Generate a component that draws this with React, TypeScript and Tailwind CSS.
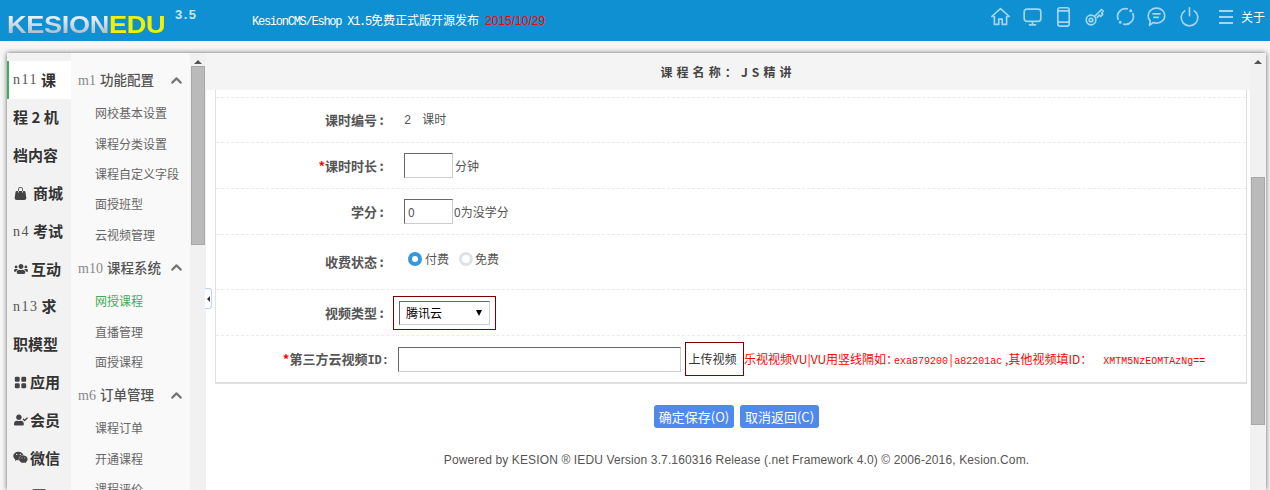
import { ChevronUp } from "lucide-react";
import { FaUserCheck, FaUsers, FaWeixin } from "react-icons/fa";
import { BsFillHandbagFill, BsFillGridFill } from "react-icons/bs";
import type { ReactNode } from "react";

const cjk = "font-['Noto_Sans_CJK_SC','Liberation_Sans',sans-serif]";
const mono = "font-['Liberation_Mono','Noto_Sans_CJK_SC',monospace]";
const serif = "font-['Liberation_Serif','Noto_Sans_CJK_SC',serif]";

const topIcons: { w: string; body: ReactNode }[] = [
  { w: "w-[33px]", body: <path d="M2 12 12 3l10 9h-3v9h-5v-6h-4v6H5v-9z" /> },
  {
    w: "w-[31px]",
    body: (
      <>
        <rect x="2.5" y="3.5" width="19" height="14" rx="3" />
        <path d="M12 18v3M8.5 21.5h7" />
      </>
    ),
  },
  {
    w: "w-[32px]",
    body: (
      <>
        <rect x="5.5" y="2" width="13" height="21" rx="2.5" />
        <path d="M5.5 5.5h13M5.5 18.5h13" />
      </>
    ),
  },
  {
    w: "w-[30px]",
    body: (
      <>
        <circle cx="8" cy="16" r="5.5" />
        <circle cx="8" cy="16" r="2" />
        <path d="m12 12 8-8 2 2-2 2 1.5 1.5-2.5 2.5-1.5-1.5-2.5 2.5" />
      </>
    ),
  },
  {
    w: "w-[31px]",
    body: (
      <>
        <path d="M3.6 15.3A9 9 0 0 1 14 3.2" />
        <path d="M20.4 8.7A9 9 0 0 1 10 20.8" />
        <circle cx="18" cy="5.5" r="0.8" />
        <circle cx="6" cy="18.5" r="0.8" />
      </>
    ),
  },
  {
    w: "w-[31px]",
    body: (
      <>
        <path d="M12 2.5c5.500 0 9.500 3.800 9.500 8.500s-4 8.500-9.500 8.500c-1.300 0-2.500-.2-3.600-.6L4 22l.8-5A8.200 8.200 0 0 1 2.500 11C2.500 6.300 6.500 2.500 12 2.500z" />
        <path d="M8 9h8M9 13h5" />
      </>
    ),
  },
  {
    w: "w-[36px]",
    body: (
      <>
        <path d="M12 2v9" />
        <path d="M6.5 5.5a9.5 9.5 0 1 0 11 0" />
      </>
    ),
  },
];

function NavItem({ prefix, icon, label, active, gap = "mr-[2px]" }: { prefix?: string; icon?: ReactNode; label: string; active?: boolean; gap?: string }) {
  return (
    <div
      className={`flex h-[37.8px] shrink-0 items-center whitespace-nowrap pl-[6px] text-[15px] font-bold text-[#333] ${
        active ? "border-l-2 border-[#3fae5a] bg-white !pl-[4px]" : ""
      }`}
    >
      {prefix && <span className={`${serif} mr-[3px] text-[14px] font-normal tracking-[1.5px] text-[#555]`}>{prefix}</span>}
      {icon && <span className={`${gap} flex w-[15px] justify-center text-[#444]`}>{icon}</span>}
      <span>{label}</span>
    </div>
  );
}

function MenuHead({ code, label }: { code: string; label: string }) {
  return (
    <div className="flex h-[36px] shrink-0 items-center justify-between pl-[7px] pr-[5px] text-[13.5px] font-medium text-[#555]">
      <span className="whitespace-nowrap">
        <span className={`${serif} mr-[4px] text-[14px] text-[#888]`}>{code}</span>
        {label}
      </span>
      <ChevronUp size={17} strokeWidth={3} className="text-[#777]" />
    </div>
  );
}

function MenuLink({ label, active }: { label: string; active?: boolean }) {
  return (
    <div className={`flex h-[30.4px] shrink-0 items-center whitespace-nowrap pl-[24px] text-[12px] ${active ? "text-[#3fae5a]" : "text-[#666]"}`}>
      {label}
    </div>
  );
}

function Scrollbar({ thumbTop, thumbHeight }: { thumbTop: string; thumbHeight: string }) {
  return (
    <div className="flex w-[16px] shrink-0 flex-col items-center bg-[#f1f1f1]">
      <div className="mt-[7px] h-0 w-0 border-x-[4px] border-b-[4px] border-x-transparent border-b-[#555]" />
      <div className={`${thumbTop} ${thumbHeight} w-[14px] border border-[#a8a8a8] bg-[#bababa]`} />
    </div>
  );
}

function Row({ label, star, height, children }: { label: string; star?: boolean; height: string; children: ReactNode }) {
  return (
    <div className={`flex ${height} items-center border-b border-dashed border-[#eaeaea]`}>
      <div className="w-[170px] shrink-0 whitespace-nowrap text-right text-[13px] font-bold text-[#555]">
        {star && <span className="text-[#f00]">*</span>}
        {label}
        <span className="inline-block w-[9px] text-center">:</span>
      </div>
      {children}
    </div>
  );
}

export default function App() {
  const insetInput = "border border-t-[#666] border-l-[#666] border-r-[#ccc] border-b-[#ccc] bg-white";
  return (
    <div className={`${cjk} flex h-[490px] w-[1270px] flex-col overflow-hidden bg-[#f6f6f6]`}>
      <header className="flex h-[41px] shrink-0 items-center bg-[#0f90d2] text-white">
        <div className="relative ml-[7px] mt-[9px] h-[23px] w-[245px] shrink-0 font-['Liberation_Sans',sans-serif]">
          <span className="inline-block origin-left scale-x-[1.18] text-[23px] font-bold leading-none tracking-[-0.3px]">
            <span className="bg-gradient-to-b from-white to-[#9fb2c2] bg-clip-text text-transparent">KESION</span>
            <span className="text-[#f4f000]">EDU</span>
          </span>
          <span className="absolute -top-[9px] left-[168px] text-[13px] font-bold tracking-[1.5px] text-[#c9e3f2]">3.5</span>
        </div>
        <div className={`${mono} whitespace-nowrap text-[12px]`}>
          <span className="tracking-[-1.25px]">KesionCMS/Eshop X1.5</span>
          <span className={cjk}>免费正式版开源发布</span>
          <span className="ml-[6px] font-['Liberation_Sans',sans-serif] text-[#f00]">2015/10/29</span>
        </div>
        <div className="mb-[8px] ml-auto flex items-center pr-[5px]">
          {topIcons.map(({ w, body }, i) => (
            <span key={i} className={`flex ${w} justify-center text-[#a5d6f1]`}>
              <svg width="21" height="21" viewBox="0 0 24 24" fill="none" stroke="currentColor" strokeWidth="1.9" strokeLinecap="round" strokeLinejoin="round">
                {body}
              </svg>
            </span>
          ))}
          <span className="ml-[5px] flex w-[31px] flex-col items-center gap-[4px] pr-[5px]">
            <span className="h-[2px] w-[14px] bg-[#a5d6f1]" />
            <span className="h-[2px] w-[14px] bg-[#a5d6f1]" />
            <span className="h-[2px] w-[14px] bg-[#a5d6f1]" />
          </span>
          <span className="-ml-[3px] text-[12px]">关于</span>
        </div>
      </header>

      <div className="relative ml-[7px] mt-[12px] flex h-[437px] w-[1259px] overflow-hidden bg-white shadow-[0_0_5px_#666]">
        <aside className="flex w-[64px] shrink-0 flex-col overflow-hidden bg-[#f2f2f2] pt-[8px]">
          <NavItem prefix="n11" label="课" active />
          <NavItem label="程 2 机" />
          <NavItem label="档内容" />
          <NavItem icon={<BsFillHandbagFill size={13} />} gap="mr-[5px]" label="商城" />
          <NavItem prefix="n4" label="考试" />
          <NavItem icon={<FaUsers size={14} />} gap="mr-[3px]" label="互动" />
          <NavItem prefix="n13" label="求" />
          <NavItem label="职模型" />
          <NavItem icon={<BsFillGridFill size={13} />} label="应用" />
          <NavItem icon={<FaUserCheck size={14} />} label="会员" />
          <NavItem icon={<FaWeixin size={15} />} label="微信" />
          <NavItem label="一 四" />
        </aside>

        <nav className="flex w-[119px] shrink-0 flex-col overflow-hidden bg-[#f9f9f9] pt-[9px]">
          <MenuHead code="m1" label="功能配置" />
          <MenuLink label="网校基本设置" />
          <MenuLink label="课程分类设置" />
          <MenuLink label="课程自定义字段" />
          <MenuLink label="面授班型" />
          <MenuLink label="云视频管理" />
          <MenuHead code="m10" label="课程系统" />
          <MenuLink label="网授课程" active />
          <MenuLink label="直播管理" />
          <MenuLink label="面授课程" />
          <MenuHead code="m6" label="订单管理" />
          <MenuLink label="课程订单" />
          <MenuLink label="开通课程" />
          <MenuLink label="课程评价" />
        </nav>

        <Scrollbar thumbTop="mt-[2px]" thumbHeight="h-[179px]" />

        <main className="flex min-w-0 flex-1 flex-col bg-white">
          <div className="flex h-[37px] shrink-0 items-center justify-center bg-[#f4f4f4] text-[12px] font-bold tracking-[4.1px] text-[#444]">
            课程名称：JS精讲
          </div>
          <div className="ml-[9px] mr-[3px] h-[294px] shrink-0 border-x border-b-2 border-[#e0e0e0] pt-[7px]">
            <Row label="课时编号" height="h-[46px] border-t">
              <span className="ml-[18px] text-[12px] text-[#555]">
                <span className={mono}>2</span>
                <span className="ml-[11px]">课时</span>
              </span>
            </Row>
            <Row label="课时时长" star height="h-[46px]">
              <input aria-label="课时时长" className={`${insetInput} ml-[18px] h-[25px] w-[49px]`} />
              <span className="ml-[2px] text-[12px] text-[#555]">分钟</span>
            </Row>
            <Row label="学分" height="h-[46px]">
              <input aria-label="学分" defaultValue="0" className={`${insetInput} ml-[18px] h-[25px] w-[49px] pl-[3px] text-[12px] text-[#555]`} />
              <span className="ml-[1px] text-[12px] text-[#555]">0为没学分</span>
            </Row>
            <Row label="收费状态" height="h-[55px]">
              <div className="ml-[22px] flex -translate-y-[3px] items-center text-[12px] text-[#555]">
                <span className="h-[14px] w-[14px] rounded-full border-[4px] border-[#3498db] bg-white" />
                <span className="ml-[3px]">付费</span>
                <span className="ml-[10px] h-[14px] w-[14px] rounded-full border-[3px] border-[#dde2e4] bg-white" />
                <span className="ml-[2px]">免费</span>
              </div>
            </Row>
            <Row label="视频类型" height="h-[46px]">
              <div className="ml-[7px] flex h-[34px] w-[103px] items-center justify-center border border-[#7b0000]">
                <div className={`${insetInput} flex h-[24px] w-[91px] items-center justify-between pl-[6px] pr-[7px] text-[12px] text-black`}>
                  腾讯云
                  <span className="h-0 w-0 border-x-[3.5px] border-t-[6px] border-x-transparent border-t-black" />
                </div>
              </div>
            </Row>
            <div className="flex h-[46px] items-center">
              <div className="w-[173px] shrink-0 whitespace-nowrap text-right text-[13px] font-bold text-[#555]">
                <span className="text-[#f00]">*</span>第三方云视频<span className={`${mono} text-[12px]`}>ID:</span>
              </div>
              <input aria-label="第三方云视频ID" className={`${insetInput} ml-[9px] h-[25px] w-[283px] shrink-0`} />
              <div className="ml-[4px] flex h-[34px] w-[59px] shrink-0 items-center justify-center border border-[#7b0000] pr-[4px] text-[12px] text-[#333]">上传视频</div>
              <span className={`${mono} whitespace-nowrap text-[10px] text-[#f00]`}>
                <span className={`${cjk} text-[12px]`}>乐视视频VU|VU用竖线隔如：</span>
                <span className="-ml-[4px]">exa879200</span>
                <span className={`${cjk} mx-[1.5px] text-[12px]`}>|</span>
                a82201ac
                <span className={`${cjk} text-[12px]`}> ,其他视频填ID：</span>
                <span className="ml-[11px]">XMTM5NzEOMTAzNg==</span>
              </span>
            </div>
          </div>

          <div className="mt-[21px] flex shrink-0 justify-center gap-[6px] pl-[17px] text-[13px] text-white">
            <button className="h-[23px] w-[80px] rounded-[3px] bg-[#5089ee]">确定保存(O)</button>
            <button className="h-[23px] w-[79px] rounded-[3px] bg-[#5089ee]">取消返回(C)</button>
          </div>
          <p className="mt-[23px] whitespace-nowrap pl-[17px] text-center font-['Liberation_Sans',sans-serif] text-[12px] tracking-[0.125px] text-[#555]">
            Powered by KESION ® IEDU Version 3.7.160316 Release (.net Framework 4.0) © 2006-2016, Kesion.Com.
          </p>
        </main>

        <Scrollbar thumbTop="mt-[113px]" thumbHeight="h-[248px]" />

        <div className="absolute left-[198px] top-[235px] flex h-[21px] w-[7px] items-center justify-center rounded-r-[3px] border border-l-0 border-[#b9d3f0] bg-white">
          <span className="h-0 w-0 border-y-[3px] border-r-[3px] border-y-transparent border-r-[#333]" />
        </div>
      </div>
    </div>
  );
}
